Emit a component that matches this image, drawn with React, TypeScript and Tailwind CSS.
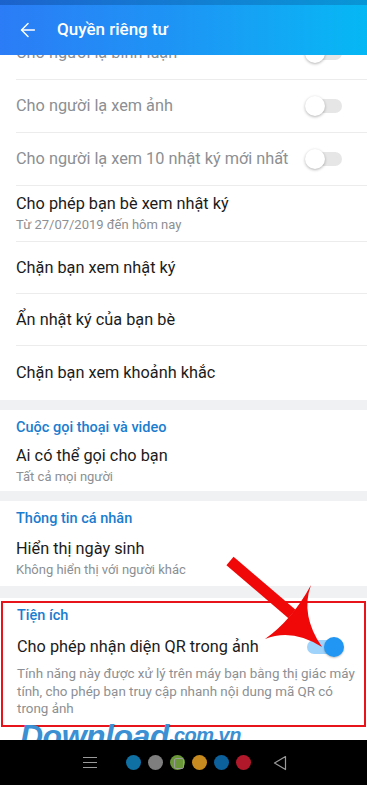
import { ArrowLeft } from "lucide-react";

const font = { fontFamily: "Roboto, 'Noto Sans', sans-serif" };

function Toggle({ on = false }: { on?: boolean }) {
  return (
    <div className="relative w-[38px] h-[22px] flex items-center shrink-0">
      <div
        className={
          on
            ? "w-[36px] h-[14px] rounded-full bg-[#9fd3fb] ml-[1px]"
            : "w-[36px] h-[14px] rounded-full bg-[#e6e6e6] ml-[1px]"
        }
      />
      <div
        className={
          on
            ? "absolute right-0 top-[1px] w-[20px] h-[20px] rounded-full bg-[#2196f3] shadow-[0_1px_2px_rgba(0,0,0,0.25)]"
            : "absolute left-0 top-[1px] w-[20px] h-[20px] rounded-full bg-white shadow-[0_1px_3px_rgba(0,0,0,0.3)]"
        }
      />
    </div>
  );
}

function Divider() {
  return <div className="ml-4 h-px bg-[#ececec]" />;
}

function Row({
  title,
  sub,
  muted = false,
  toggle = false,
  h = "h-[52px]",
}: {
  title: string;
  sub?: string;
  muted?: boolean;
  toggle?: boolean;
  h?: string;
}) {
  return (
    <div className={`${h} flex items-center pl-4 pr-[24px]`}>
      <div className="flex-1 min-w-0">
        <div
          className={
            muted
              ? "text-[16.3px] leading-[20px] text-[#8c8f93]"
              : "text-[16.3px] leading-[20px] text-[#1b1b1b]"
          }
        >
          {title}
        </div>
        {sub && (
          <div className="text-[13px] leading-[17px] mt-[2px] text-[#8c8f93]">
            {sub}
          </div>
        )}
      </div>
      {toggle && <Toggle />}
    </div>
  );
}

function SectionHeader({ label }: { label: string }) {
  return (
    <div className="text-[14.5px] leading-[18px] font-medium text-[#1a7dcf]">
      {label}
    </div>
  );
}

export default function App() {
  return (
    <div
      className="relative w-[367px] h-[785px] overflow-hidden bg-[#f0f1f3] flex flex-col"
      style={font}
    >
      {/* status strip */}
      <div className="h-[5px] bg-gradient-to-r from-[#1c62cc] to-[#0896d6]" />
      {/* header */}
      <div className="relative z-10 h-[50px] flex items-center bg-gradient-to-r from-[#2b7cf6] via-[#1c96f5] to-[#05b8f4]">
        <ArrowLeft className="ml-[17px] w-[22px] h-[22px] text-white" strokeWidth={1.6} />
        <div className="ml-[18px] text-[17px] font-medium text-white">
          Quyền riêng tư
        </div>
      </div>

      {/* privacy list */}
      <div className="bg-white">
        <div className="h-[24px] overflow-hidden">
          <div className="-mt-[29px]">
            <Row title="Cho người lạ bình luận" muted toggle h="h-[53px]" />
          </div>
        </div>
        <Divider />
        <Row title="Cho người lạ xem ảnh" muted toggle />
        <Divider />
        <Row title="Cho người lạ xem 10 nhật ký mới nhất" muted toggle />
        <Divider />
        <Row
          title="Cho phép bạn bè xem nhật ký"
          sub="Từ 27/07/2019 đến hôm nay"
          h="h-[55px]"
        />
        <Divider />
        <Row title="Chặn bạn xem nhật ký" h="h-[51px]" />
        <Divider />
        <Row title="Ẩn nhật ký của bạn bè" h="h-[51px]" />
        <Divider />
        <Row title="Chặn bạn xem khoảnh khắc" h="h-[54px]" />
      </div>

      {/* calls */}
      <div className="mt-[10px] bg-white h-[81px] pl-4 pt-[9px]">
        <SectionHeader label="Cuộc gọi thoại và video" />
        <div className="mt-[9px] text-[16.3px] leading-[20px] text-[#1b1b1b]">
          Ai có thể gọi cho bạn
        </div>
        <div className="text-[13px] leading-[17px] mt-[2px] text-[#8c8f93]">
          Tất cả mọi người
        </div>
      </div>

      {/* personal */}
      <div className="mt-[10px] bg-white h-[85px] pl-4 pt-[9px]">
        <SectionHeader label="Thông tin cá nhân" />
        <div className="mt-[11px] text-[16.3px] leading-[20px] text-[#1b1b1b]">
          Hiển thị ngày sinh
        </div>
        <div className="text-[13px] leading-[17px] mt-[2px] text-[#8c8f93]">
          Không hiển thị với người khác
        </div>
      </div>

      {/* utilities */}
      <div className="mt-[12px] bg-white flex-1 pt-[3px] flex flex-col">
        <div className="mx-[1px] h-[126px] border-2 border-[#e8141b] pl-[14px] pr-[8px] pt-[4px]">
          <SectionHeader label="Tiện ích" />
          <div className="mt-[11px] flex items-center pr-[12px]">
            <div className="flex-1 text-[16.3px] leading-[20px] text-[#1b1b1b]">
              Cho phép nhận diện QR trong ảnh
            </div>
            <Toggle on />
          </div>
          <div className="mt-[7px] text-[13.4px] leading-[17.5px] text-[#8c8f93]">
            Tính năng này được xử lý trên máy bạn bằng thị giác máy tính, cho
            phép bạn truy cập nhanh nội dung mã QR có trong ảnh
          </div>
        </div>
        <div className="flex-1" />
        {/* nav bar */}
        <div className="relative z-20 h-[45px] bg-black flex items-center">
          <div className="ml-[83px] w-[14px] flex flex-col gap-[4px]">
            <div className="h-px bg-[#9a9a9a]" />
            <div className="h-px bg-[#9a9a9a]" />
            <div className="h-px bg-[#9a9a9a]" />
          </div>
          <div className="ml-[29px] flex items-center gap-[7px]">
            <div className="w-[15px] h-[15px] rounded-full bg-[#0f70a3]" />
            <div className="w-[15px] h-[15px] rounded-full bg-[#7e7e7e]" />
            <div className="relative w-[15px] h-[15px] rounded-full bg-[#6a9838]">
              <div className="absolute left-[4px] top-[3px] w-[10px] h-[11px] border border-[#9a9a9a] rounded-[2px]" />
            </div>
            <div className="w-[15px] h-[15px] rounded-full bg-[#c68a1f]" />
            <div className="w-[15px] h-[15px] rounded-full bg-[#0c609c]" />
            <div className="w-[15px] h-[15px] rounded-full bg-[#b1192b]" />
          </div>
          <svg className="ml-[22px]" width="14" height="16" viewBox="0 0 14 16">
            <path d="M12.5 1.5 L1.5 8 L12.5 14.5 Z" fill="none" stroke="#9a9a9a" strokeWidth="1.2" strokeLinejoin="round" />
          </svg>
        </div>
      </div>

      {/* watermark */}
      <div className="absolute z-10 left-[20px] top-[720px] flex items-baseline italic font-black text-[#3b90d3] tracking-[-0.5px] pointer-events-none">
        <span className="text-[32px] leading-[32px]" style={{ fontFamily: "'Liberation Sans', Arial, sans-serif" }}>
          Download
        </span>
        <span className="relative -top-[5px] text-[20px] leading-[20px]" style={{ fontFamily: "'Liberation Sans', Arial, sans-serif" }}>
          .com.vn
        </span>
      </div>

      {/* red arrow annotation */}
      <svg
        className="absolute z-10 left-0 top-0 pointer-events-none"
        width="367"
        height="785"
        viewBox="0 0 367 785"
      >
        <line x1="230" y1="561" x2="292" y2="614" stroke="#f00808" strokeWidth="11" />
        <path
          d="M311 585 Q300 615 322 647 Q292 628 265 639 Q292 620 311 585 Z"
          fill="#f00808"
        />
      </svg>
    </div>
  );
}
